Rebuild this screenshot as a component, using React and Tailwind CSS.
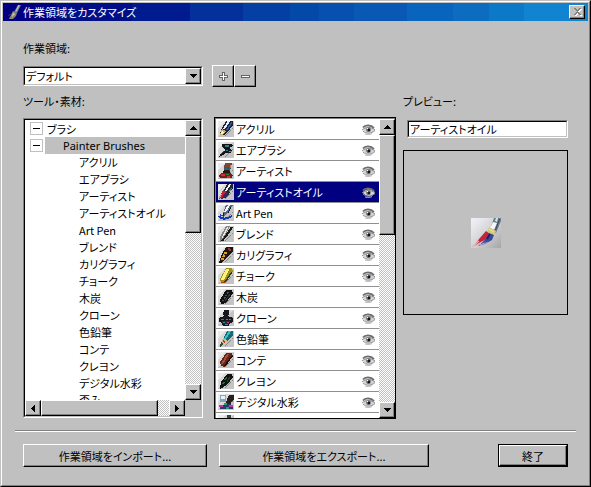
import React, { useState } from "react";

const RAISED =
  "border border-t-white border-l-white border-r-black border-b-black bg-[#c0c0c0] shadow-[inset_-1px_-1px_0_#808080]";
const SUNKEN =
  "border border-t-[#808080] border-l-[#808080] border-r-white border-b-white";
const SUNKEN_IN =
  "border border-t-black border-l-black border-r-[#c0c0c0] border-b-[#c0c0c0] bg-white";
const TRACK =
  "bg-[repeating-conic-gradient(#c0c0c0_0_25%,#ffffff_0_50%)] bg-[length:2px_2px]";

const brushes = [
  "アクリル",
  "エアブラシ",
  "アーティスト",
  "アーティストオイル",
  "Art Pen",
  "ブレンド",
  "カリグラフィ",
  "チョーク",
  "木炭",
  "クローン",
  "色鉛筆",
  "コンテ",
  "クレヨン",
  "デジタル水彩",
  "歪み",
];

const art = [
  <g key="a">
    <path d="M8 0h7v4l-5 7-4 3H2l1-5z" fill="#1b2234" />
    <path d="M11 0L6 8" stroke="#e8eefa" strokeWidth="2" />
    <path d="M14 1L9 9" stroke="#2a58b8" strokeWidth="1.4" />
    <path d="M4 8l4 2-3 4H2z" fill="#c9b070" />
    <path d="M4 10l2 1-2 2H3z" fill="#fff4b8" />
  </g>,
  <g key="b">
    <path d="M4 2h10l1 2-3 1v2l2 2-2 2H8l-3 2-4 2 2-4 4-2V7L4 5z" fill="#12181c" />
    <path d="M7 4h4M8 8l2 1" stroke="#2e8088" strokeWidth="1.2" />
    <path d="M11 9l3 1" stroke="#3aa090" />
    <path d="M3 12l3-3" stroke="#444" />
  </g>,
  <g key="c">
    <path d="M7 0h7l-1 5H6z" fill="#7c4632" />
    <path d="M6 4h7l-1 4H6z" fill="#2a5c6c" />
    <path d="M6 7h5l2 4H4z" fill="#2a1714" />
    <path d="M1 12l3-2h8l3 2-1 3H2z" fill="#7e1c18" />
    <path d="M3 12h4M9 14h3" stroke="#d83028" strokeWidth="1.4" />
    <path d="M8 11h3M7 6h2" stroke="#288040" />
    <path d="M12 2v3" stroke="#c08060" />
  </g>,
  <g key="d">
    <path d="M9 0h6v4l-5 7-5-3z" fill="#1f2830" />
    <path d="M12 0L8 7" stroke="#eef2f8" strokeWidth="1.8" />
    <path d="M5 6l4 2-3 5-5 2 2-5z" fill="#d01c28" />
    <path d="M8 8l3 2-4 4-4 1z" fill="#342858" />
    <path d="M1 14l3-4" stroke="#f09090" />
    <path d="M11 8l3-4" stroke="#708070" />
  </g>,
  <g key="e">
    <path d="M8 0h7l-5 8-4 3-1-3z" fill="#5b6680" />
    <path d="M11 0L7 7" stroke="#f4f6ff" strokeWidth="2" />
    <path d="M1 11c2 4 9 3 13 0" stroke="#1838b0" strokeWidth="2" fill="none" />
    <path d="M2 10l4 1" stroke="#2048c0" strokeWidth="1.6" />
    <path d="M6 8l-1 3M13 2l-3 6" stroke="#181c28" />
  </g>,
  <g key="f">
    <path d="M8 0h4L6 12l-4 4V11z" fill="#858585" />
    <path d="M10 1L4 12" stroke="#e9e9e9" strokeWidth="1.2" />
    <path d="M14 1L8 10l-4 5" stroke="#181818" strokeWidth="2" fill="none" />
  </g>,
  <g key="g">
    <path d="M8 0h7v4l-6 7-6 5H1l2-7z" fill="#1c1614" />
    <path d="M8 5l-4 8" stroke="#e0a020" strokeWidth="3" />
    <path d="M6 7l3 2M4 10l3 1" stroke="#382008" />
    <path d="M10 2l3 1" stroke="#a03828" strokeWidth="2" />
  </g>,
  <g key="h">
    <path d="M8 0h6l1 3-8 12H3l-1-4z" fill="#9c9418" />
    <path d="M10 1L4 12" stroke="#fff07c" strokeWidth="3" />
    <path d="M14 4l-7 10" stroke="#34380c" strokeWidth="1.4" />
    <path d="M3 14h4" stroke="#c03820" />
  </g>,
  <g key="i">
    <path d="M8 1h6l1 3-7 10-5 1-1-4z" fill="#101214" />
    <path d="M10 3L5 12" stroke="#50565a" strokeWidth="1.4" strokeDasharray="2 1" />
    <path d="M12 5l-5 7" stroke="#34383c" />
  </g>,
  <g key="j">
    <path d="M6 0h5v4l-1 2 5 2v4l-3 1-1 3H5l-1-3-3-1V8l5-2-1-2z" fill="#17171c" />
    <path d="M4 11h8l-1 3H5z" fill="#2d2448" />
    <path d="M3 9h3M9 12h2" stroke="#b04080" />
    <path d="M8 9h2M5 12h2" stroke="#289878" />
    <path d="M7 14h3M11 9h2" stroke="#5870d0" />
  </g>,
  <g key="k">
    <path d="M9 0h6v4l-6 6-4-2z" fill="#146c74" />
    <path d="M12 0L7 8" stroke="#38c0c0" strokeWidth="2" />
    <path d="M5 7l4 2-3 4-3-1z" fill="#d4b888" />
    <path d="M3 11l3 2-4 3z" fill="#28503c" />
    <path d="M5 10l2 1" stroke="#c83020" strokeWidth="1.5" />
  </g>,
  <g key="l">
    <path d="M8 1h6l1 3-8 11-4-1-1-4z" fill="#642418" />
    <path d="M10 2L4 12" stroke="#a85038" strokeWidth="2" />
    <path d="M14 4l-7 10" stroke="#200c08" strokeWidth="1.6" />
  </g>,
  <g key="m">
    <path d="M9 1h5l1 3-6 8-7 4 1-7z" fill="#0d1610" />
    <path d="M9 4L7 7M6 9l-1 2" stroke="#2f7040" strokeWidth="1.4" />
    <path d="M12 4l-3 5" stroke="#503028" />
  </g>,
  <g key="n">
    <path d="M2 1h6v7H2z" fill="#88a8b8" />
    <path d="M3 2h4v3H3z" fill="#e8f4f8" />
    <path d="M11 1h5v4l-5 7-4-2z" fill="#28201c" />
    <path d="M1 11h5l4-1 5 1v4H2z" fill="#34346c" />
    <path d="M1 12h4M11 12h4" stroke="#c838a0" strokeWidth="2" />
    <path d="M6 10h3M8 14h3" stroke="#20a070" strokeWidth="2" />
  </g>,
  <g key="o">
    <path d="M9 0h4v4L7 12z" fill="#404040" />
  </g>,
];

function BrushIcon({ index }) {
  return (
    <svg className="size-4 shrink-0" viewBox="0 0 16 16" fill="none" shapeRendering="crispEdges" aria-hidden="true">
      <path d="M0 0h16v16H0z" fill="#c4c4c4" />
      <path d="M0 0h15L0 15z" fill="#dadada" />
      <path d="M0 0h7L0 7z" fill="#ececec" />
      <path d="M15 7l-8 8" stroke="#858585" strokeDasharray="2 1" />
      {art[index]}
    </svg>
  );
}

function Eye() {
  return (
    <svg className="h-[11px] w-[13px]" viewBox="0 0 13 11" fill="none" aria-hidden="true">
      <path d="M1 6C3 1 10 1 13 6 10 10 4 10 1 6z" fill="#d4d4d4" />
      <path d="M1 3.500C3 .5 9 .5 12 4" stroke="#6c6c6c" strokeWidth="1.800" />
      <path d="M0 6C3 3 9 2.500 13 6" stroke="#8c8c8c" />
      <path d="M1 7c3 3 8 3 12-.5" stroke="#8c8c8c" />
      <circle cx="6.500" cy="5.700" r="2.300" fill="#5a626c" />
      <path d="M6 5h2v2H6z" fill="#10141c" />
      <path d="M5 4h1v1H5z" fill="#fff" />
      <path d="M3 10c3 .6 5 .6 7-.4" stroke="#b4b4b4" />
    </svg>
  );
}

function Arrow({ dir }) {
  const d = {
    up: "M3 0h1v1h1v1h1v1h1v1H0V3h1V2h1V1h1z",
    down: "M0 0h7v1H6v1H5v1H4v1H3V3H2V2H1V1H0z",
    left: "M4 0v7H3V6H2V5H1V4H0V3h1V2h1V1h1V0z",
    right: "M0 0h1v1h1v1h1v1h1v1H3v1H2v1H1v1H0z",
  }[dir];
  const side = dir === "left" || dir === "right";
  return (
    <svg className={side ? "h-[7px] w-1" : "h-1 w-[7px]"} viewBox={side ? "0 0 4 7" : "0 0 7 4"} shapeRendering="crispEdges" aria-hidden="true">
      <path d={d} fill="#000" />
    </svg>
  );
}

function ScrollButton({ dir }) {
  return (
    <button type="button" aria-label={dir} className={`${RAISED} flex size-4 shrink-0 items-center justify-center`}>
      <Arrow dir={dir} />
    </button>
  );
}

function TreeToggle({ label }) {
  return (
    <button type="button" aria-label={label} className="flex size-[13px] items-center justify-center border border-[#c0c0c0] bg-white">
      <span className="h-px w-[7px] bg-black" />
    </button>
  );
}

function PaintBrush({ className }) {
  return (
    <svg className={className} viewBox="0 0 30 30" aria-hidden="true">
      <defs>
        <linearGradient id="paper" x1="0" y1="0" x2="1" y2="1">
          <stop offset="0" stopColor="#f2f2fa" />
          <stop offset=".5" stopColor="#d4d4d6" />
          <stop offset="1" stopColor="#a6a6a8" />
        </linearGradient>
      </defs>
      <path d="M0 0h30v30H0z" fill="url(#paper)" />
      <path d="M23 0h7v3l-5 12-6-4z" fill="#6c7c88" />
      <path d="M22 4l4 1-3 7-4-2z" fill="#f4f8fa" />
      <path d="M25 0h2l-1 4-2-1z" fill="#d8e4ec" />
      <path d="M28.500 1l-4 11" stroke="#3c4a56" strokeWidth="1" />
      <path d="M18 9l7 4-2 4-7-3z" fill="#d8c878" />
      <path d="M18 11l5 3" stroke="#f3e7a8" strokeWidth="1" />
      <path d="M15 13l4 3-3 5-6 3-7 4 5-7z" fill="#c42438" />
      <path d="M18 15l5 2-2 5-7 4-7 2 7-6z" fill="#38489c" />
      <path d="M19 16l-3 5" stroke="#281c50" strokeWidth="1.600" />
      <path d="M1 29l7-6M4 28l7-4M9 27l5-2" stroke="#dcb4bc" strokeWidth="1.200" />
      <path d="M10 27l7-3" stroke="#8898d0" strokeWidth="1" />
    </svg>
  );
}

export default function App() {
  const [selected, setSelected] = useState(3);
  return (
    <div className="min-h-screen border border-t-[#c0c0c0] border-l-[#c0c0c0] border-r-black border-b-black bg-[#c0c0c0] font-['Noto_Sans_CJK_JP',sans-serif] text-[11px] leading-4 text-black [font-feature-settings:'palt']">
      <div className="flex min-h-[calc(100vh-2px)] flex-col border border-t-white border-l-white border-r-[#808080] border-b-[#808080] p-px">
        <header className="flex h-[18px] items-center bg-[linear-gradient(90deg,#000080_0_9%,#000f88_9%_22%,#001a90_22%_32%,#04309c_32%_41%,#0440a4_41%_49%,#0448a8_49%_54%,#0850b0_54%_60%,#0858b4_60%_69%,#0864bc_69%_77%,#0c6cc0_77%_83%,#0c78c8_83%_89%,#1084d0_89%)] pr-[3px] pl-1 text-white">
          <svg className="size-4" viewBox="0 0 16 16" aria-hidden="true">
            <path d="M11 1h3l-4 8-3-1z" fill="#7d848a" />
            <path d="M12 1L9 7" stroke="#c8cccc" />
            <path d="M6 7l4 2-1 3-3 3H2l2-4z" fill="#8a8874" />
            <path d="M6 9l2 1-3 3z" fill="#d4d0b0" />
            <path d="M1 12l4-3" stroke="#30383c" />
          </svg>
          <h1 className="flex-1">作業領域をカスタマイズ</h1>
          <button type="button" aria-label="閉じる" className={`${RAISED} flex h-[14px] w-4 items-center justify-center`}>
            <svg className="h-2 w-[9px]" viewBox="0 0 9 8" fill="none" shapeRendering="crispEdges" aria-hidden="true">
              <path d="M2 1h2v1h1v1h1V2h1V1h2v1H8v1H7v1H6v1h1v1h1v1h1v1H7V7H6V6H5v1H4v1H2V7h1V6h1V5h1V4H4V3H3V2H2z" fill="#fff" />
              <path d="M1 0h2v1h1v1h1V1h1V0h2v1H7v1H6v1H5v1h1v1h1v1h1v1H6V6H5V5H4v1H3v1H1V6h1V5h1V4h1V3H3V2H2V1H1z" fill="#808080" />
            </svg>
          </button>
        </header>

        <main className="px-5 pt-[19px]">
          <label htmlFor="workspace" className="block">作業領域:</label>
          <div className="mt-[9px] flex items-center">
            <div className={`${SUNKEN} w-[180px]`}>
              <div className={`${SUNKEN_IN} relative h-[18px]`}>
                <select id="workspace" className="block h-4 w-full appearance-none bg-white pl-px leading-4 outline-none">
                  <option>デフォルト</option>
                </select>
                <span className={`${RAISED} pointer-events-none absolute top-0 right-0 flex size-4 items-center justify-center`}>
                  <Arrow dir="down" />
                </span>
              </div>
            </div>
            <button type="button" aria-label="追加" className={`${RAISED} ml-[9px] flex size-[22px] items-center justify-center`}>
              <svg className="size-[9px]" viewBox="0 0 9 9" shapeRendering="crispEdges" aria-hidden="true">
                <path d="M3 0h3v3h3v3H6v3H3V6H0V3h3z" fill="#666" />
                <path d="M4 1h1v3h3v1H5v3H4V5H1V4h3z" fill="#fff" />
              </svg>
            </button>
            <button type="button" aria-label="削除" className={`${RAISED} flex size-[22px] items-center justify-center`}>
              <svg className="h-[3px] w-[9px]" viewBox="0 0 9 3" shapeRendering="crispEdges" aria-hidden="true">
                <path d="M0 0h9v3H0z" fill="#666" />
                <path d="M1 1h7v1H1z" fill="#fff" />
              </svg>
            </button>
          </div>

          <div className="mt-[6px] flex">
            <section className="flex-[180_1_0px]">
              <h2>ツール・素材:</h2>
              <div className={`${SUNKEN} mt-[9px]`}>
                <div className={`${SUNKEN_IN} h-[298px]`}>
                  <div className="flex h-[280px]">
                    <ul className="min-w-0 flex-1 overflow-hidden whitespace-nowrap">
                      <li className="flex h-[17px] items-center gap-1 pl-[5px]">
                        <TreeToggle label="ブラシ" />
                        ブラシ
                      </li>
                      <li className="flex h-[17px] items-center gap-[2px] pl-[5px]">
                        <TreeToggle label="Painter Brushes" />
                        <span className="flex-1 bg-[#c0c0c0] pl-[18px] font-['Noto_Sans',sans-serif] leading-[17px]">Painter Brushes</span>
                      </li>
                      {brushes.map((name) => (
                        <li key={name} className="h-[17px] pl-[54px]">{name}</li>
                      ))}
                    </ul>
                    <div className={`${TRACK} flex w-4 flex-col`}>
                      <ScrollButton dir="up" />
                      <div className={`${RAISED} h-[97px]`} />
                      <div className="flex-1" />
                      <ScrollButton dir="down" />
                    </div>
                  </div>
                  <div className="flex h-4 bg-[#c0c0c0] pr-4">
                    <div className={`${TRACK} flex flex-1`}>
                      <ScrollButton dir="left" />
                      <div className={`${RAISED} w-[117px]`} />
                      <div className="flex-1" />
                      <ScrollButton dir="right" />
                    </div>
                  </div>
                </div>
              </div>
            </section>

            <section aria-label="ブラシ" className="ml-[11px] flex-[182_1_0px] pt-6">
              <div className="border border-black">
                <div className="flex h-[300px] border-t border-l border-[#808080] bg-white">
                  <ul className="min-w-0 flex-1 overflow-hidden">
                    {brushes.map((name, i) => (
                      <li
                        key={name}
                        className={`flex h-[21px] items-center border-b border-[#909090] pr-1 pl-[2px] ${i === selected ? "bg-[#000080] text-white" : "bg-white"}`}
                      >
                        <button type="button" onClick={() => setSelected(i)} className="flex min-w-0 flex-1 items-center gap-[2px] text-left whitespace-nowrap">
                          <BrushIcon index={i} />
                          {name}
                        </button>
                        <button type="button" aria-label={`${name} 表示`}>
                          <Eye />
                        </button>
                      </li>
                    ))}
                  </ul>
                  <div className={`${TRACK} flex w-4 flex-col`}>
                    <ScrollButton dir="up" />
                    <div className={`${RAISED} h-[100px]`} />
                    <div className="flex-1" />
                    <ScrollButton dir="down" />
                  </div>
                </div>
              </div>
            </section>

            <section className="ml-[7px] flex-[165_1_0px]">
              <label htmlFor="preview-name" className="block">プレビュー:</label>
              <div className={`${SUNKEN} mt-[11px] ml-1`}>
                <input
                  id="preview-name"
                  readOnly
                  value={brushes[selected]}
                  className={`${SUNKEN_IN} block h-4 w-full px-px outline-none`}
                />
              </div>
              <div className="mt-3 flex aspect-square items-center justify-center border border-black">
                <PaintBrush className="size-[30px]" />
              </div>
            </section>
          </div>
        </main>

        <hr className="mx-3 mt-[11px] h-[2px] border-0 border-t border-[#808080] bg-white" />

        <footer className="flex items-center px-5 pt-3 pb-4">
          <button type="button" className={`${RAISED} h-[23px] flex-[182_1_0px]`}>作業領域をインポート...</button>
          <button type="button" className={`${RAISED} ml-3 h-[23px] flex-[208_1_0px]`}>作業領域をエクスポート...</button>
          <div className="ml-[69px] flex flex-[68_1_0px] border border-black">
            <button type="button" className={`${RAISED} h-[21px] flex-1`}>終了</button>
          </div>
        </footer>
      </div>
    </div>
  );
}
